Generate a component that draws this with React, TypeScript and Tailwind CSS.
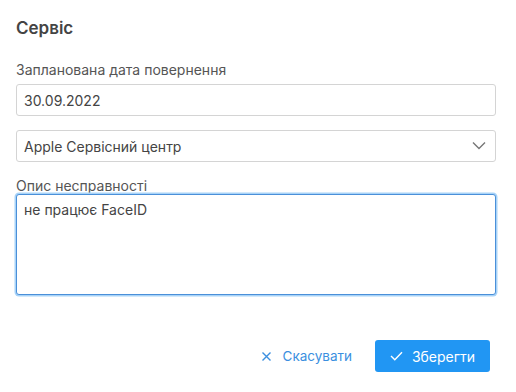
import React, { useState } from 'react'

const App = () => {
  const [date, setDate] = useState('30.09.2022')
  const [center, setCenter] = useState('Apple Сервісний центр')
  const [issue, setIssue] = useState('не працює FaceID')

  return (
    <div
      className="w-[516px] h-[392px] bg-white pl-4 pr-5 pt-4 flex flex-col text-[#4a4a4a]"
      style={{ fontFamily: 'Inter, "Noto Sans", sans-serif' }}
    >
      <h2 className="text-[17px] leading-6 font-semibold text-[#444]">Сервіс</h2>

      <label className="mt-5 text-[14px] leading-5 text-[#555]">Запланована дата повернення</label>
      <input
        value={date}
        onChange={(e) => setDate(e.target.value)}
        className="mt-1 h-8 w-full rounded-[3px] border border-[#d4d4d4] px-[7px] text-[14px] text-[#444] outline-none"
      />

      <div className="relative mt-[14px]">
        <select
          value={center}
          onChange={(e) => setCenter(e.target.value)}
          className="h-8 w-full appearance-none rounded-[3px] border border-[#d4d4d4] bg-white px-[7px] text-[14px] text-[#444] outline-none"
        >
          <option>Apple Сервісний центр</option>
        </select>
        <svg
          className="pointer-events-none absolute right-[10px] top-[11px]"
          width="14"
          height="9"
          viewBox="0 0 14 9"
          fill="none"
        >
          <path d="M1 1.5l6 6 6-6" stroke="#777" strokeWidth="1.4" />
        </svg>
      </div>

      <label className="mt-[14px] text-[14px] leading-5 text-[#555]">Опис несправності</label>
      <textarea
        value={issue}
        onChange={(e) => setIssue(e.target.value)}
        className="relative -mt-0.5 h-[101px] w-full resize-none rounded-[3px] border border-[#4a90d9] bg-white px-[7px] py-[5px] text-[14px] leading-5 text-[#444] outline-none shadow-[0_0_0_1.5px_#a8d3f8]"
      />

      <div className="mt-[45px] flex items-center justify-end gap-[23px] pr-[6px]">
        <button className="flex items-center gap-[12px] text-[13.5px] text-[#3b8fe0]">
          <svg width="9" height="9" viewBox="0 0 9 9" fill="none">
            <path d="M0.5 0.5l8 8M8.5 0.5l-8 8" stroke="#3b8fe0" strokeWidth="1.4" />
          </svg>
          Скасувати
        </button>
        <button className="flex h-8 w-[115px] items-center justify-center gap-[9px] rounded-[3px] bg-[#2196f3] text-[14px] text-white">
          <svg width="13" height="10" viewBox="0 0 13 10" fill="none">
            <path d="M1 5l3.8 3.8L12 1.2" stroke="#fff" strokeWidth="1.4" />
          </svg>
          Зберегти
        </button>
      </div>
    </div>
  )
}

export default App
